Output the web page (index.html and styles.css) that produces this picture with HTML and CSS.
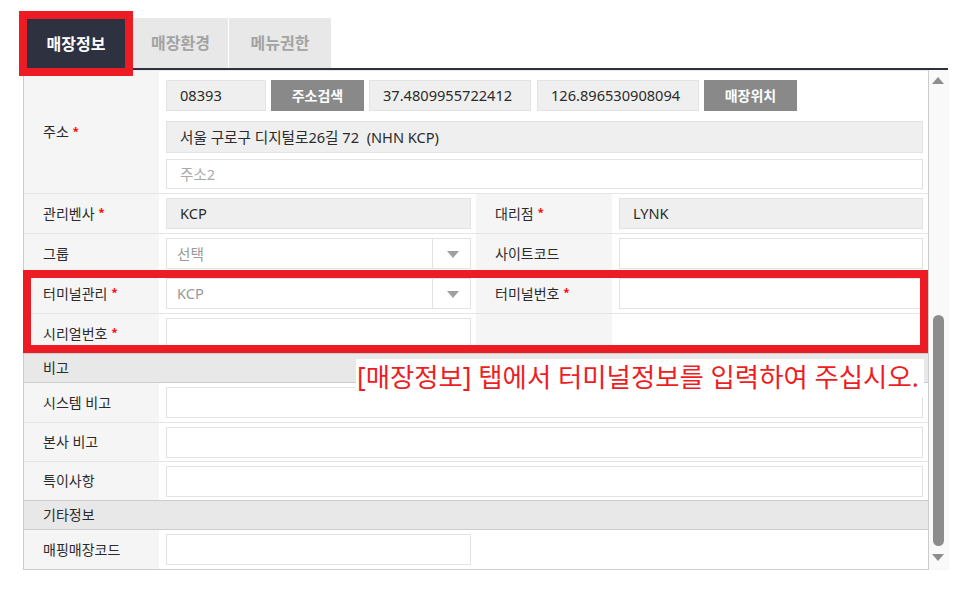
FILE: index.html
```html
<!DOCTYPE html>
<html lang="ko">
<head>
<meta charset="utf-8">
<title>매장정보</title>
<link rel="stylesheet" href="styles.css">
</head>
<body>
<div class="screen">
  <div class="tabs">
    <div class="tab active">매장정보</div>
    <div class="tab t2">매장환경</div>
    <div class="tab t3">메뉴권한</div>
  </div>
  <div class="panel">
    <div class="box">
      <div class="row addr">
        <div class="lbl">주소<span class="req">*</span></div>
        <div class="cell addr-cell">
          <div class="line">
            <div class="inp ro w100">08393</div>
            <div class="btn">주소검색</div>
            <div class="inp ro w162">37.4809955722412</div>
            <div class="inp ro w162 wide">126.896530908094</div>
            <div class="btn">매장위치</div>
          </div>
          <div class="inp ro l2">서울 구로구 디지털로26길 72 &nbsp;(NHN KCP)</div>
          <div class="inp l3 ph">주소2</div>
        </div>
      </div>
      <div class="row">
        <div class="lbl">관리벤사<span class="req">*</span></div>
        <div class="cell"><div class="inp ro">KCP</div></div>
        <div class="lbl">대리점<span class="req">*</span></div>
        <div class="cell"><div class="inp ro">LYNK</div></div>
      </div>
      <div class="row">
        <div class="lbl">그룹</div>
        <div class="cell"><div class="sel"><div class="v">선택</div><div class="arr"><i class="tri"></i></div></div></div>
        <div class="lbl">사이트코드</div>
        <div class="cell"><div class="inp"></div></div>
      </div>
      <div class="row">
        <div class="lbl">터미널관리<span class="req">*</span></div>
        <div class="cell"><div class="sel"><div class="v">KCP</div><div class="arr"><i class="tri"></i></div></div></div>
        <div class="lbl">터미널번호<span class="req">*</span></div>
        <div class="cell"><div class="inp"></div></div>
      </div>
      <div class="row pre">
        <div class="lbl">시리얼번호<span class="req">*</span></div>
        <div class="cell"><div class="inp"></div></div>
        <div class="lbl"></div>
        <div class="cell"></div>
      </div>
      <div class="hdr">비고</div>
      <div class="row full">
        <div class="lbl">시스템 비고</div>
        <div class="cell"><div class="inp"></div></div>
      </div>
      <div class="row full short">
        <div class="lbl">본사 비고</div>
        <div class="cell"><div class="inp"></div></div>
      </div>
      <div class="row full short pre">
        <div class="lbl">특이사항</div>
        <div class="cell"><div class="inp"></div></div>
      </div>
      <div class="hdr">기타정보</div>
      <div class="row half last">
        <div class="lbl">매핑매장코드</div>
        <div class="cell"><div class="inp"></div></div>
        <div class="cell"></div>
      </div>
    </div>
    <div class="sbar">
      <i class="up"></i>
      <i class="thumb"></i>
      <i class="down"></i>
    </div>
  </div>

  <div class="mark"></div>
  <div class="note">[매장정보] 탭에서 터미널정보를 입력하여 주십시오.</div>
</div>
</body>
</html>
```

FILE: styles.css
```css
html, body {
  margin: 0;
  padding: 0;
  background: #fff;
}

body {
  font-family: "Noto Sans", "Noto Sans CJK KR", sans-serif;
  font-size: 14px;
  color: #2b2b2b;
}

.screen {
  position: relative;
  width: 973px;
  height: 609px;
  padding-top: 18px;
  box-sizing: border-box;
  overflow: hidden;
}

/* tabs */
.tabs {
  display: flex;
  margin-left: 27px;
  width: 921px;
  height: 50px;
  border-bottom: 2px solid #2e3240;
}

.tab {
  height: 50px;
  display: flex;
  align-items: center;
  justify-content: center;
  background: #e8e8e8;
  color: #a3a3a3;
  font-weight: 700;
  font-size: 16px;
  box-sizing: border-box;
  padding-bottom: 2px;
}

.tab.active {
  position: relative;
  z-index: 2;
  width: 98px;
  height: 49px;
  margin-top: 1px;
  margin-right: 8px;
  background: #2e3240;
  color: #fff;
  outline: 8px solid #ed1c24;
}

.t2 { width: 95px; margin-right: 1px; }
.t3 { width: 102px; }

/* panel */
.panel {
  display: flex;
  margin-left: 23px;
  width: 926px;
}

.box {
  width: 906px;
  box-sizing: border-box;
  border-top: 1px solid #e8e8e8;
  border-left: 1px solid #ccc;
  border-right: 1px solid #ccc;
  border-bottom: 1px solid #ccc;
}

.row {
  display: grid;
  grid-template-columns: 135px 317px 136px 316px;
  height: 40px;
  box-sizing: border-box;
  border-bottom: 1px solid #e5e5e5;
}

.row.full { grid-template-columns: 135px 1fr; }
.row.half { grid-template-columns: 135px 317px 1fr; }
.row.short { height: 39px; }
.row.pre { border-bottom-color: #ccc; }
.row.last { border-bottom: 0; height: 39px; }

.row.addr {
  grid-template-columns: 135px 1fr;
  height: auto;
}

.lbl {
  background: #f5f5f5;
  padding-left: 19px;
  padding-bottom: 2px;
  display: flex;
  align-items: center;
  white-space: nowrap;
}

.req {
  color: #f00;
  font-size: 11px;
  font-weight: 700;
  margin-left: 4px;
  position: relative;
  top: -1px;
}

.cell {
  padding: 0 5px 0 7px;
  display: flex;
  align-items: center;
}

.addr-cell {
  flex-direction: column;
  align-items: stretch;
  padding-top: 9px;
  padding-bottom: 4px;
}

.line {
  display: flex;
  gap: 5px;
  height: 31px;
}

.inp {
  flex: 1;
  height: 31px;
  box-sizing: border-box;
  border: 1px solid #e3e3e3;
  background: #fff;
  display: flex;
  align-items: center;
  padding-left: 13px;
  padding-bottom: 1px;
  white-space: nowrap;
  font-size: 14.6px;
}

.inp.ro { background: #efefef; }
.inp.ph { color: #aaa; }
.w100 { flex: 0 0 100px; }
.w162 { flex: 0 0 162px; }
.wide { margin-left: 1px; }

.l2 { flex: 0 0 32px; margin-top: 10px; }
.l3 { flex: 0 0 30px; margin-top: 6px; }

.btn {
  flex: 0 0 93px;
  height: 31px;
  background: #898989;
  color: #fff;
  font-weight: 700;
  display: flex;
  align-items: center;
  justify-content: center;
  padding-bottom: 1px;
  box-sizing: border-box;
}

.sel {
  flex: 1;
  height: 31px;
  box-sizing: border-box;
  border: 1px solid #e3e3e3;
  display: flex;
}

.sel .v {
  flex: 1;
  padding-left: 10px;
  padding-bottom: 1px;
  color: #999;
  font-size: 14.6px;
  display: flex;
  align-items: center;
}

.sel .arr {
  width: 38px;
  box-sizing: border-box;
  border-left: 1px solid #e3e3e3;
  display: flex;
  align-items: center;
  justify-content: center;
  padding-left: 2px;
}

.tri {
  display: block;
  width: 0;
  height: 0;
  border-left: 6px solid transparent;
  border-right: 6px solid transparent;
  border-top: 7px solid #a0a0a0;
  margin-top: 2px;
}

.hdr {
  height: 29px;
  box-sizing: border-box;
  background: #e8e8e8;
  border-bottom: 1px solid #ccc;
  padding-left: 19px;
  padding-bottom: 2px;
  display: flex;
  align-items: center;
}

/* scrollbar */
.sbar {
  width: 20px;
  background: #f9f9f9;
  display: flex;
  flex-direction: column;
  align-items: flex-start;
}

.sbar .up {
  display: block;
  width: 0;
  height: 0;
  margin: 7px 0 0 3px;
  border-left: 6.5px solid transparent;
  border-right: 6.5px solid transparent;
  border-bottom: 7px solid #8e8e8e;
}

.sbar .thumb {
  display: block;
  width: 11px;
  height: 231px;
  margin: 231px 0 0 4px;
  border-radius: 6px;
  background: #8c8c8c;
}

.sbar .down {
  display: block;
  width: 0;
  height: 0;
  margin: 8px 0 0 3px;
  border-left: 6.5px solid transparent;
  border-right: 6.5px solid transparent;
  border-top: 7px solid #8e8e8e;
}

/* annotations overlaying the form */
.mark {
  position: absolute;
  left: 23px;
  top: 270px;
  width: 905px;
  height: 83px;
  box-sizing: border-box;
  border: 8px solid #ed1c24;
}

.note {
  position: absolute;
  left: 356px;
  top: 359px;
  width: 568px;
  height: 38px;
  background: #fff;
  color: #ee1d23;
  font-size: 26.4px;
  line-height: 36px;
  padding-left: 1px;
  box-sizing: border-box;
  white-space: nowrap;
}
```
